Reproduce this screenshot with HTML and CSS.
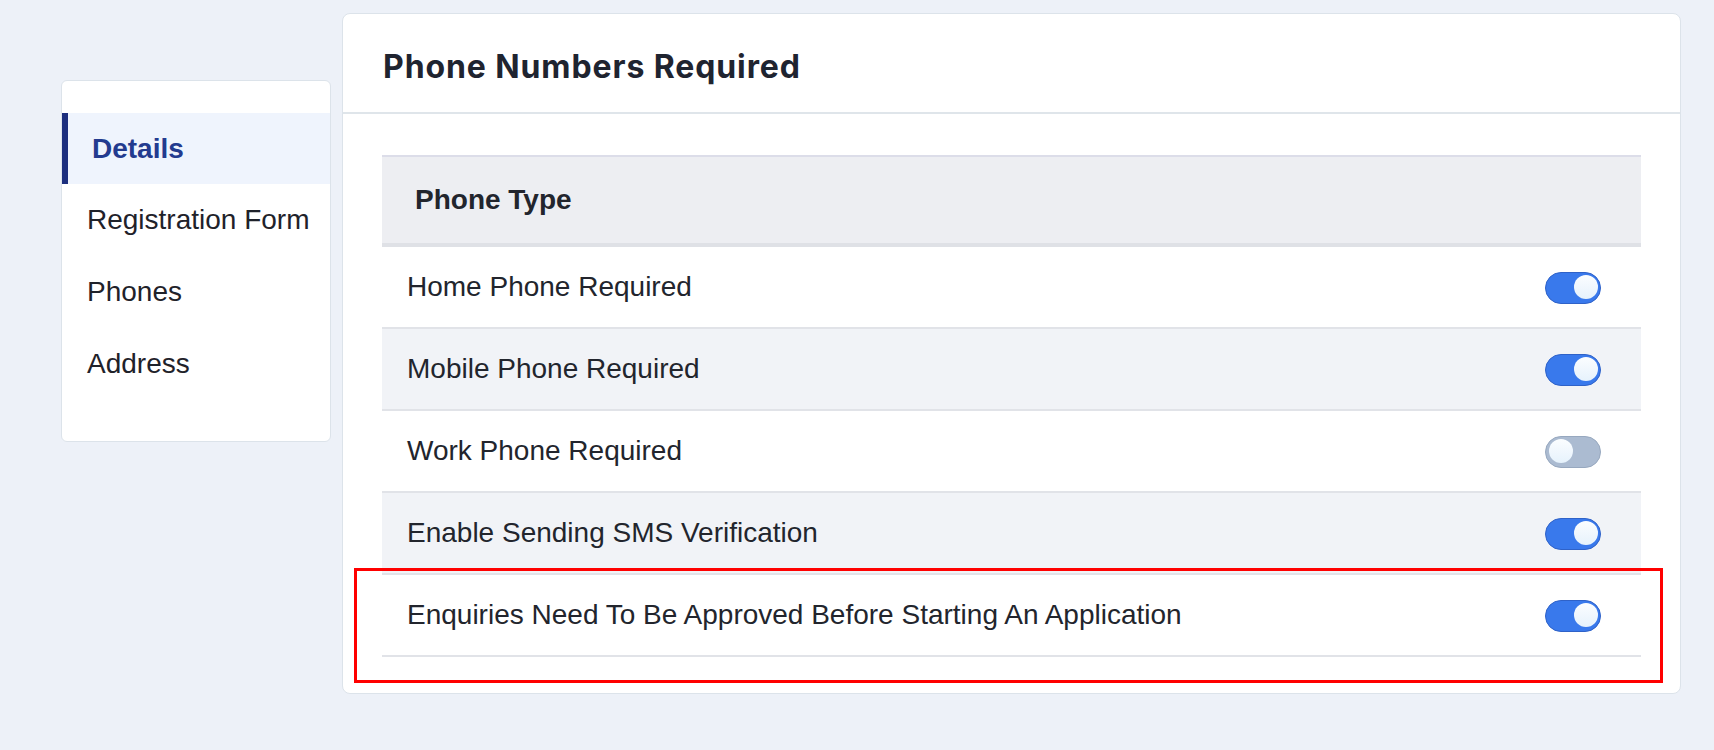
FILE: index.html
```html
<!DOCTYPE html>
<html lang="en">
<head>
  <meta charset="UTF-8">
  <title>Phone Numbers Required</title>
  <link rel="stylesheet" href="styles.css">
</head>
<body>

  <div class="page">
    <div class="side-menu">
      <a class="menu-item active" href="#">Details</a>
      <a class="menu-item" href="#">Registration Form</a>
      <a class="menu-item" href="#">Phones</a>
      <a class="menu-item" href="#">Address</a>
    </div>

    <div class="card">
      <div class="card-header">
        <h2>Phone Numbers Required</h2>
      </div>

      <div class="card-body">
        <table class="phone-table">
          <thead>
            <tr><th colspan="2">Phone Type</th></tr>
          </thead>
          <tbody>
            <tr>
              <td>Home Phone Required</td>
              <td class="switch-cell"><span class="switch on"></span></td>
            </tr>
            <tr>
              <td>Mobile Phone Required</td>
              <td class="switch-cell"><span class="switch on"></span></td>
            </tr>
            <tr>
              <td>Work Phone Required</td>
              <td class="switch-cell"><span class="switch"></span></td>
            </tr>
            <tr>
              <td>Enable Sending SMS Verification</td>
              <td class="switch-cell"><span class="switch on"></span></td>
            </tr>
            <tr>
              <td>Enquiries Need To Be Approved Before Starting An Application</td>
              <td class="switch-cell"><span class="switch on"></span></td>
            </tr>
          </tbody>
        </table>
      </div>

      <!-- highlight box drawn on the screenshot -->
      <div class="highlight"></div>
    </div>
  </div>

</body>
</html>
```

FILE: styles.css
```css
body {
  margin: 0;
  font-family: "Liberation Sans", Arial, sans-serif;
  background-color: #edf1f8;
  color: #22252d;
}

.page {
  display: flex;
  align-items: flex-start;
  gap: 11px;
  padding: 13px 0 0 61px;
}

/* left menu */
.side-menu {
  width: 270px;
  height: 362px;
  box-sizing: border-box;
  margin-top: 67px;
  padding-top: 32px;
  background: #fff;
  border: 1.5px solid #dce3ea;
  border-radius: 6px;
  display: flex;
  flex-direction: column;
}

.menu-item {
  display: flex;
  align-items: center;
  height: 72px;
  padding-left: 25px;
  font-size: 28px;
  color: #1f222a;
  text-decoration: none;
}

.menu-item.active {
  height: 71px;
  padding-left: 24px;
  border-left: 6px solid #1d2f7e;
  background: #eff4fd;
  color: #233b8f;
  font-weight: bold;
}

/* main card */
.card {
  position: relative;
  width: 1339px;
  height: 681px;
  box-sizing: border-box;
  background: #fff;
  border: 1.5px solid #dce3ea;
  border-radius: 8px;
}

.card-header {
  height: 91px;
  display: flex;
  align-items: center;
  padding: 7px 0 0 40px;
  border-bottom: 2px solid #dfe5ea;
}

.card-header h2 {
  margin: 0;
  font-family: Inter, "Liberation Sans", sans-serif;
  font-size: 32px;
  font-weight: 700;
  letter-spacing: 0.9px;
  color: #1f2430;
}

.card-body {
  padding: 41px 39px 0 39px;
}

.phone-table {
  width: 100%;
  border-collapse: collapse;
}

.phone-table th {
  height: 86px;
  padding: 0 0 0 33px;
  text-align: left;
  font-size: 28px;
  font-weight: bold;
  color: #22252d;
  background: #edeef2;
  border-top: 2px solid #dcdde9;
  border-bottom: 4px solid #dfe1e6;
}

.phone-table td {
  height: 80px;
  padding: 0 0 0 25px;
  font-size: 28px;
  border-bottom: 2px solid #e1e3e8;
}

.phone-table tbody tr:nth-child(even) td {
  background: #f1f3f7;
}

.phone-table td.switch-cell {
  width: 56px;
  padding: 0 40px 0 0;
  text-align: right;
}

/* toggle switch */
.switch {
  display: inline-block;
  vertical-align: middle;
  position: relative;
  width: 56px;
  height: 32px;
  box-sizing: border-box;
  border-radius: 16px;
  background: #abbbd1;
  border: 1.5px solid #97a8bf;
}

.switch::after {
  content: "";
  position: absolute;
  top: 2.5px;
  left: 2.5px;
  width: 24px;
  height: 24px;
  border-radius: 50%;
  background: linear-gradient(#fbfdff, #e6f2fc);
}

.switch.on {
  background: #3979ec;
  border-color: #2f62c8;
}

.switch.on::after {
  left: auto;
  right: 2.5px;
}

.highlight {
  position: absolute;
  left: 11px;
  top: 554px;
  width: 1309px;
  height: 115px;
  box-sizing: border-box;
  border: 3px solid #ff0000;
}
```
